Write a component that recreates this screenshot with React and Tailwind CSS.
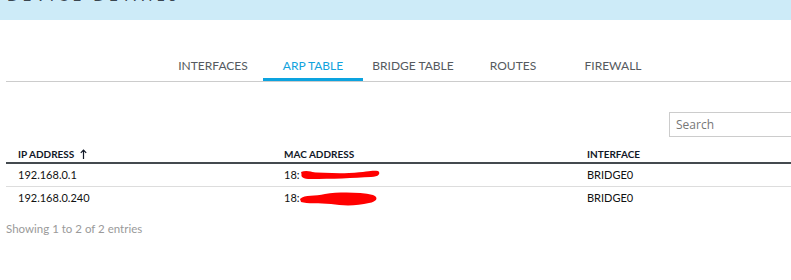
import React from "react";

function Redact({ variant = 0 }) {
  return variant === 0 ? (
    <svg width="82" height="14" viewBox="0 0 82 14" className="inline-block align-middle ml-[-1px]">
      <path d="M3 5 C 12 3, 30 6, 50 5 S 72 2, 79 3 C 82 5, 80 9, 72 9 C 55 10, 32 11, 12 11 C 4 11, 1 9, 3 5 Z" fill="#ff0000" />
      <path d="M2 4 C 6 2, 12 3, 16 5 L 14 10 C 8 11, 3 9, 2 4 Z" fill="#ff0000" />
    </svg>
  ) : (
    <svg width="80" height="16" viewBox="0 0 80 16" className="inline-block align-middle ml-[-1px]">
      <path d="M1 8 C 6 3, 16 6, 26 3 C 40 1, 60 1, 74 4 C 80 6, 78 11, 70 12 C 58 15, 44 15, 32 13 C 20 12, 8 13, 2 11 Z" fill="#ff0000" />
    </svg>
  );
}

export default function App() {
  const tabs = ["INTERFACES", "ARP TABLE", "BRIDGE TABLE", "ROUTES", "FIREWALL"];
  const rows = [
    { ip: "192.168.0.1", iface: "BRIDGE0", v: 0 },
    { ip: "192.168.0.240", iface: "BRIDGE0", v: 1 },
  ];
  return (
    <div className="w-[791px] h-[280px] overflow-hidden bg-white" style={{ fontFamily: "Lato, 'Open Sans', sans-serif" }}>
      <div className="h-[20px] bg-[#cdebf8] overflow-hidden pl-[7px]">
        <div className="mt-[-12px] text-[15px] leading-[15px] tracking-[0.28em] text-[#3a4650] font-normal">DEVICE DETAILS</div>
      </div>

      <div className="mt-[37px] ml-[6px] mr-[-20px] border-b border-[#cccccc] flex pl-[157px]">
        {tabs.map((t, i) => (
          <div
            key={t}
            className={
              "w-[100px] text-center text-[12px] leading-[16px] pt-[1px] pb-[4px] border-b-[3px] " +
              (i === 1 ? "text-[#11a3dd] border-[#0ca3df]" : "text-[#555a60] border-transparent")
            }
          >
            {t}
          </div>
        ))}
      </div>

      <div className="flex justify-end mt-[30px] mr-[-30px]">
        <div className="w-[152px] h-[25px] border border-[#cccccc] flex items-center pl-[6px] text-[12px] text-[#777] bg-white" style={{ fontFamily: "'Open Sans', sans-serif" }}>
          Search
        </div>
      </div>

      <div className="ml-[6px] mt-[9px]">
        <div className="grid grid-cols-[266px_303px_1fr] border-b-2 border-[#444a4f] text-[10px] font-bold text-[#111827] leading-[16px] pb-0">
          <div className="px-3 flex items-center gap-[6px]">
            IP ADDRESS
            <svg width="7" height="10" viewBox="0 0 7 10"><path d="M3.5 1 V10 M0.8 3.8 L3.5 1 L6.2 3.8" stroke="#111827" strokeWidth="1.2" fill="none" /></svg>
          </div>
          <div className="px-3">MAC ADDRESS</div>
          <div className="px-3">INTERFACE</div>
        </div>
        {rows.map((r, i) => (
          <div
            key={r.ip}
            className={
              "grid grid-cols-[266px_303px_1fr] text-[11px] text-[#111] h-[23px] items-center " +
              (i === 0 ? "border-b border-[#dddddd]" : "")
            }
          >
            <div className="px-3">{r.ip}</div>
            <div className="px-3 flex items-center whitespace-nowrap">
              18:<Redact variant={r.v} />
            </div>
            <div className="px-3">{r.iface}</div>
          </div>
        ))}
        <div className="mt-[10px] text-[11.5px] text-[#9a9a9a]">Showing 1 to 2 of 2 entries</div>
      </div>
    </div>
  );
}
